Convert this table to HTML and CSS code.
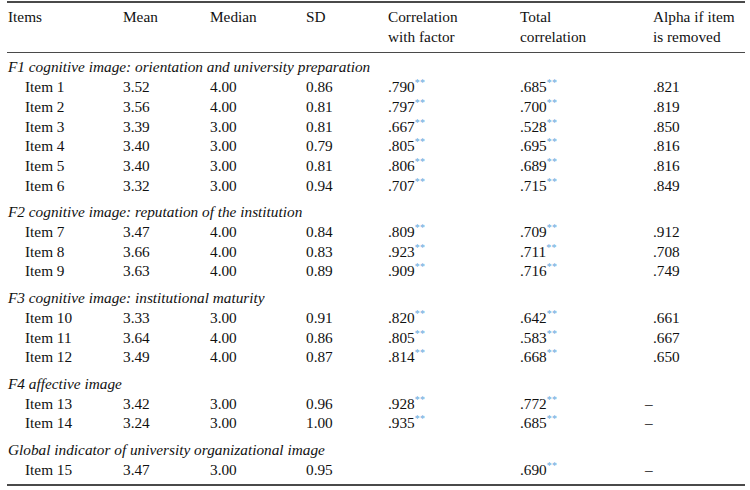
FILE: index.html
```html
<!DOCTYPE html>
<html lang="en">
<head>
<meta charset="utf-8">
<title>Item statistics</title>
<link rel="stylesheet" href="styles.css">
</head>
<body>
<table class="stats">
  <colgroup>
    <col class="c-item"><col class="c-mean"><col class="c-median"><col class="c-sd"><col class="c-corr"><col class="c-total"><col class="c-alpha">
  </colgroup>
  <thead>
    <tr>
      <th class="first">Items</th>
      <th>Mean</th>
      <th>Median</th>
      <th>SD</th>
      <th>Correlation<br>with factor</th>
      <th>Total<br>correlation</th>
      <th>Alpha if item<br>is removed</th>
    </tr>
  </thead>
  <tbody>
    <tr class="group top"><td colspan="7">F1 cognitive image: orientation and university preparation</td></tr>
    <tr><td class="item">Item 1</td><td>3.52</td><td>4.00</td><td>0.86</td><td>.790<sup class="sig">**</sup></td><td>.685<sup class="sig">**</sup></td><td>.821</td></tr>
    <tr><td class="item">Item 2</td><td>3.56</td><td>4.00</td><td>0.81</td><td>.797<sup class="sig">**</sup></td><td>.700<sup class="sig">**</sup></td><td>.819</td></tr>
    <tr><td class="item">Item 3</td><td>3.39</td><td>3.00</td><td>0.81</td><td>.667<sup class="sig">**</sup></td><td>.528<sup class="sig">**</sup></td><td>.850</td></tr>
    <tr><td class="item">Item 4</td><td>3.40</td><td>3.00</td><td>0.79</td><td>.805<sup class="sig">**</sup></td><td>.695<sup class="sig">**</sup></td><td>.816</td></tr>
    <tr><td class="item">Item 5</td><td>3.40</td><td>3.00</td><td>0.81</td><td>.806<sup class="sig">**</sup></td><td>.689<sup class="sig">**</sup></td><td>.816</td></tr>
    <tr><td class="item">Item 6</td><td>3.32</td><td>3.00</td><td>0.94</td><td>.707<sup class="sig">**</sup></td><td>.715<sup class="sig">**</sup></td><td>.849</td></tr>

    <tr class="group"><td colspan="7">F2 cognitive image: reputation of the institution</td></tr>
    <tr><td class="item">Item 7</td><td>3.47</td><td>4.00</td><td>0.84</td><td>.809<sup class="sig">**</sup></td><td>.709<sup class="sig">**</sup></td><td>.912</td></tr>
    <tr><td class="item">Item 8</td><td>3.66</td><td>4.00</td><td>0.83</td><td>.923<sup class="sig">**</sup></td><td>.711<sup class="sig">**</sup></td><td>.708</td></tr>
    <tr><td class="item">Item 9</td><td>3.63</td><td>4.00</td><td>0.89</td><td>.909<sup class="sig">**</sup></td><td>.716<sup class="sig">**</sup></td><td>.749</td></tr>

    <tr class="group"><td colspan="7">F3 cognitive image: institutional maturity</td></tr>
    <tr><td class="item">Item 10</td><td>3.33</td><td>3.00</td><td>0.91</td><td>.820<sup class="sig">**</sup></td><td>.642<sup class="sig">**</sup></td><td>.661</td></tr>
    <tr><td class="item">Item 11</td><td>3.64</td><td>4.00</td><td>0.86</td><td>.805<sup class="sig">**</sup></td><td>.583<sup class="sig">**</sup></td><td>.667</td></tr>
    <tr><td class="item">Item 12</td><td>3.49</td><td>4.00</td><td>0.87</td><td>.814<sup class="sig">**</sup></td><td>.668<sup class="sig">**</sup></td><td>.650</td></tr>

    <tr class="group"><td colspan="7">F4 affective image</td></tr>
    <tr><td class="item">Item 13</td><td>3.42</td><td>3.00</td><td>0.96</td><td>.928<sup class="sig">**</sup></td><td>.772<sup class="sig">**</sup></td><td><span class="dash">–</span></td></tr>
    <tr><td class="item">Item 14</td><td>3.24</td><td>3.00</td><td>1.00</td><td>.935<sup class="sig">**</sup></td><td>.685<sup class="sig">**</sup></td><td><span class="dash">–</span></td></tr>

    <tr class="group"><td colspan="7">Global indicator of university organizational image</td></tr>
    <tr class="last"><td class="item">Item 15</td><td>3.47</td><td>3.00</td><td>0.95</td><td></td><td>.690<sup class="sig">**</sup></td><td><span class="dash">–</span></td></tr>
  </tbody>
</table>
</body>
</html>
```

FILE: styles.css
```css
html, body {
  margin: 0;
  padding: 0;
  background: #ffffff;
}

body {
  font-family: "Liberation Serif", "Times New Roman", serif;
  font-size: 15.3px;
  color: #111111;
}

.stats {
  margin: 1px 0 0 7px;
  width: 738px;
  border-collapse: collapse;
  table-layout: fixed;
  border-top: 2px solid #4a4a4a;
  border-bottom: 2px solid #4a4a4a;
}

.c-item   { width: 116px; }
.c-mean   { width: 87px; }
.c-median { width: 96px; }
.c-sd     { width: 82px; }
.c-corr   { width: 132px; }
.c-total  { width: 133px; }
.c-alpha  { width: 92px; }

.stats th,
.stats td {
  padding: 0;
  text-align: left;
  vertical-align: top;
  line-height: 19.7px;
  white-space: nowrap;
}

.stats th {
  font-weight: normal;
  padding-top: 4px;
  padding-bottom: 6px;
  border-bottom: 1px solid #4a4a4a;
}

.stats th.first {
  padding-left: 1px;
}

.stats td.item {
  padding-left: 18px;
}

.group td {
  font-style: italic;
  padding-left: 1px;
  padding-top: 7px;
}

.group.top td {
  padding-top: 4px;
}

.last td {
  padding-bottom: 5px;
}

.sig {
  color: #5fa6dc;
  font-size: 10px;
  line-height: 0;
  vertical-align: 6px;
  letter-spacing: 0.3px;
}

.dash {
  margin-left: -8px;
}
```
